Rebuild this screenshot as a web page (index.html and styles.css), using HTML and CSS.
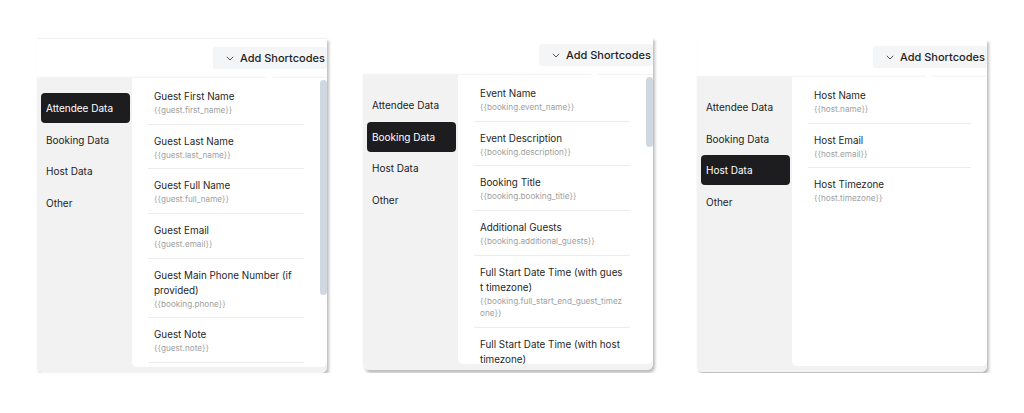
FILE: index.html
```html
<!DOCTYPE html>
<html lang="en">
<head>
<meta charset="utf-8">
<title>Add Shortcodes</title>
<link rel="stylesheet" href="styles.css">
</head>
<body>
<div class="stage">
  <section class="widget widget--one">
    <div class="toolbar">
      <button class="add-btn"><svg class="chev" width="8" height="5" viewBox="0 0 8 5"><polyline points="0.8,0.8 4,4 7.2,0.8" fill="none" stroke="#555" stroke-width="1"/></svg>Add Shortcodes</button>
    </div>
    <div class="dropdown">
      <ul class="tabs">
        <li class="tab tab--active">Attendee Data</li>
        <li class="tab">Booking Data</li>
        <li class="tab">Host Data</li>
        <li class="tab">Other</li>
      </ul>
      <div class="pane">
        <ul class="list">
          <li class="item"><div class="item-title">Guest First Name</div><div class="item-code">{{guest.first_name}}</div></li>
          <li class="item"><div class="item-title">Guest Last Name</div><div class="item-code">{{guest.last_name}}</div></li>
          <li class="item"><div class="item-title">Guest Full Name</div><div class="item-code">{{guest.full_name}}</div></li>
          <li class="item"><div class="item-title">Guest Email</div><div class="item-code">{{guest.email}}</div></li>
          <li class="item"><div class="item-title">Guest Main Phone Number (if provided)</div><div class="item-code">{{booking.phone}}</div></li>
          <li class="item item--divided"><div class="item-title">Guest Note</div><div class="item-code">{{guest.note}}</div></li>
        </ul>
        <div class="scroll"><div class="thumb" style="height:215px"></div></div>
      </div>
    </div>
  </section>

  <section class="widget widget--two">
    <div class="toolbar">
      <button class="add-btn"><svg class="chev" width="8" height="5" viewBox="0 0 8 5"><polyline points="0.8,0.8 4,4 7.2,0.8" fill="none" stroke="#555" stroke-width="1"/></svg>Add Shortcodes</button>
    </div>
    <div class="dropdown">
      <ul class="tabs">
        <li class="tab">Attendee Data</li>
        <li class="tab tab--active">Booking Data</li>
        <li class="tab">Host Data</li>
        <li class="tab">Other</li>
      </ul>
      <div class="pane">
        <ul class="list">
          <li class="item"><div class="item-title">Event Name</div><div class="item-code">{{booking.event_name}}</div></li>
          <li class="item"><div class="item-title">Event Description</div><div class="item-code">{{booking.description}}</div></li>
          <li class="item"><div class="item-title">Booking Title</div><div class="item-code">{{booking.booking_title}}</div></li>
          <li class="item"><div class="item-title">Additional Guests</div><div class="item-code">{{booking.additional_guests}}</div></li>
          <li class="item"><div class="item-title">Full Start Date Time (with guest timezone)</div><div class="item-code">{{booking.full_start_end_guest_timezone}}</div></li>
          <li class="item"><div class="item-title">Full Start Date Time (with host timezone)</div></li>
        </ul>
        <div class="scroll"><div class="thumb" style="height:70px"></div></div>
      </div>
    </div>
  </section>

  <section class="widget widget--three">
    <div class="toolbar">
      <button class="add-btn"><svg class="chev" width="8" height="5" viewBox="0 0 8 5"><polyline points="0.8,0.8 4,4 7.2,0.8" fill="none" stroke="#555" stroke-width="1"/></svg>Add Shortcodes</button>
    </div>
    <div class="dropdown">
      <ul class="tabs">
        <li class="tab">Attendee Data</li>
        <li class="tab">Booking Data</li>
        <li class="tab tab--active">Host Data</li>
        <li class="tab">Other</li>
      </ul>
      <div class="pane">
        <ul class="list">
          <li class="item"><div class="item-title">Host Name</div><div class="item-code">{{host.name}}</div></li>
          <li class="item"><div class="item-title">Host Email</div><div class="item-code">{{host.email}}</div></li>
          <li class="item"><div class="item-title">Host Timezone</div><div class="item-code">{{host.timezone}}</div></li>
        </ul>
        <div class="scroll scroll--none"></div>
      </div>
    </div>
  </section>
</div>
</body>
</html>
```

FILE: styles.css
```css
* { box-sizing: border-box; }

body {
  margin: 0;
  background: #ffffff;
  font-family: Inter, "Noto Sans", "Liberation Sans", sans-serif;
  color: #1f1f1f;
}

.stage {
  display: flex;
  align-items: flex-start;
  padding-left: 37px;
}

.widget {
  width: 290px;
  background: #ffffff;
  border-radius: 0 0 6px 6px;
  box-shadow: 2px 3px 3px rgba(0, 0, 0, 0.26);
  padding-top: 7px;
  margin-top: 40px;
}

.widget--one {
  margin-top: 38px;
  padding-top: 8px;
  border-top: 1px solid #f0f0f0;
}

.widget--two {
  margin-left: 36px;
  margin-top: 37px;
}

.widget--three {
  margin-left: 44px;
  margin-top: 39px;
}

.toolbar {
  display: flex;
  justify-content: flex-end;
  margin-bottom: 9px;
}

.add-btn {
  width: 114px;
  height: 22px;
  display: flex;
  align-items: center;
  gap: 6px;
  padding: 0 0 0 13px;
  border: 0;
  border-radius: 3px;
  background: #f4f5f7;
  font-family: Inter, "Noto Sans", sans-serif;
  font-size: 11px;
  font-weight: 500;
  color: #1f1f1f;
  white-space: nowrap;
}

.chev { flex-shrink: 0; }

.dropdown {
  position: relative;
  display: flex;
  height: 295px;
  padding-bottom: 6px;
  background: #f2f2f2;
  border-radius: 0 0 6px 6px;
  box-shadow: 0 -1px 2px rgba(0, 0, 0, 0.06);
}

.dropdown::before {
  content: "";
  position: absolute;
  top: -4px;
  left: 228px;
  border-left: 4px solid transparent;
  border-right: 4px solid transparent;
  border-bottom: 4px solid #ffffff;
}

.tabs {
  width: 95px;
  flex-shrink: 0;
  list-style: none;
  margin: 0;
  padding: 15px 2px 0 4px;
}

.tab {
  height: 30px;
  line-height: 30px;
  margin-bottom: 1.5px;
  padding-left: 5px;
  border-radius: 4px;
  font-size: 10px;
  color: #222222;
  white-space: nowrap;
}

.tab--active {
  background: #1d1d1f;
  color: #ffffff;
}

.pane {
  flex: 1;
  display: flex;
  min-width: 0;
  background: #ffffff;
  border-radius: 0 0 5px 5px;
  overflow: hidden;
}

.list {
  flex: 1;
  min-width: 0;
  list-style: none;
  margin: 0;
  padding: 2px 16px 0 16px;
}

.item {
  padding: 9px 6px 7.2px;
  border-bottom: 1px solid #ececec;
}

.item:last-child { border-bottom: 0; }
.item--divided:last-child { border-bottom: 1px solid #ececec; }

.item-title {
  font-size: 9.85px;
  line-height: 15px;
  color: #1f1f1f;
  word-break: break-all;
}

.item-code {
  font-size: 8.2px;
  line-height: 12.5px;
  color: #a0a0a0;
  word-break: break-all;
}

.scroll {
  width: 7px;
  flex-shrink: 0;
  padding-top: 2px;
}

.scroll--none { width: 0; }

.thumb {
  width: 7px;
  border-radius: 3.5px;
  background: #cfd8e0;
}
```
